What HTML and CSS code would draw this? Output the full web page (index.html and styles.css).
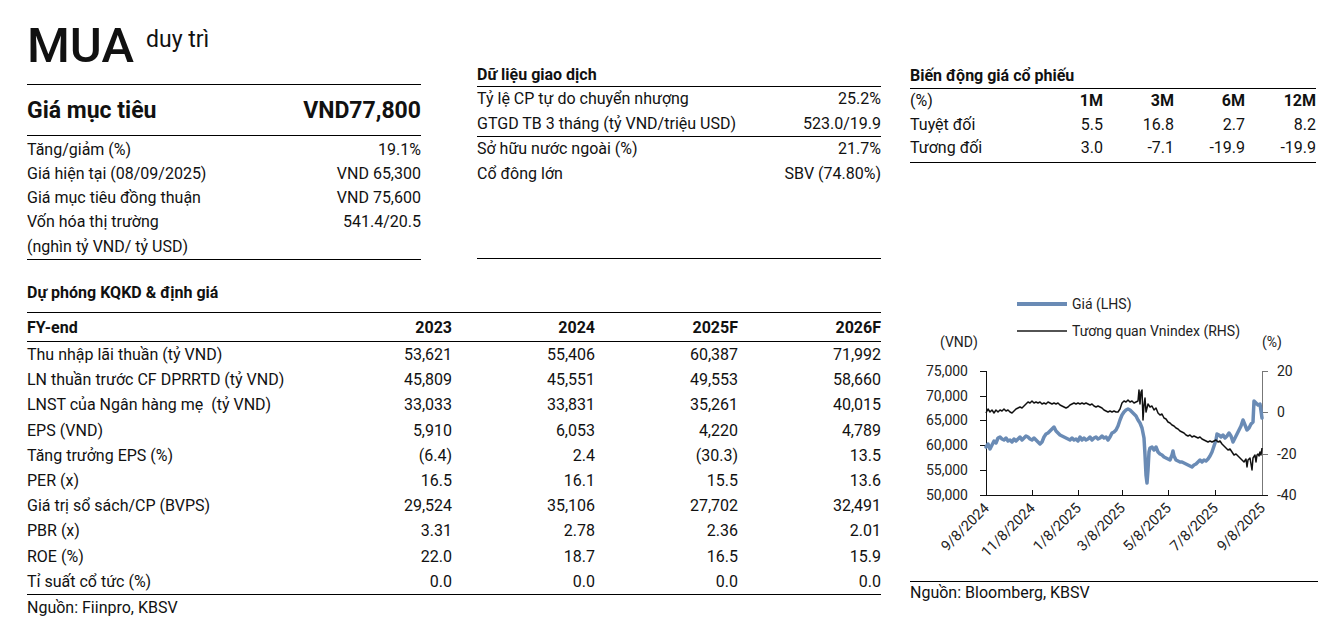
FILE: index.html
```html
<!DOCTYPE html>
<html lang="vi">
<head>
<meta charset="utf-8">
<title>MUA duy trì</title>
<link rel="stylesheet" href="styles.css">
</head>
<body>
<div class="page">
  <div class="top">
    <section class="rating">
      <div class="rating-head">MUA <span class="rating-sub">duy trì</span></div>
      <div class="target"><span>Giá mục tiêu</span><span>VND77,800</span></div>
      <div class="kv-list">
        <div class="kv"><span>Tăng/giảm (%)</span><span>19.1%</span></div>
        <div class="kv"><span>Giá hiện tại (08/09/2025)</span><span>VND 65,300</span></div>
        <div class="kv"><span>Giá mục tiêu đồng thuận</span><span>VND 75,600</span></div>
        <div class="kv"><span>Vốn hóa thị trường</span><span>541.4/20.5</span></div>
        <div class="kv"><span>(nghìn tỷ VND/ tỷ USD)</span><span></span></div>
      </div>
    </section>

    <section class="trade">
      <h2 class="sec-title">Dữ liệu giao dịch</h2>
      <div class="trade-group">
        <div class="kv"><span>Tỷ lệ CP tự do chuyển nhượng</span><span>25.2%</span></div>
        <div class="kv"><span>GTGD TB 3 tháng (tỷ VND/triệu USD)</span><span>523.0/19.9</span></div>
      </div>
      <div class="trade-group trade-group-last">
        <div class="kv"><span>Sở hữu nước ngoài (%)</span><span>21.7%</span></div>
        <div class="kv"><span>Cổ đông lớn</span><span>SBV (74.80%)</span></div>
      </div>
    </section>

    <section class="perf">
      <h2 class="sec-title perf-title">Biến động giá cổ phiếu</h2>
      <div class="perf-grid">
        <span class="pl">(%)</span><span class="ph">1M</span><span class="ph">3M</span><span class="ph">6M</span><span class="ph">12M</span>
        <span class="pl">Tuyệt đối</span><span>5.5</span><span>16.8</span><span>2.7</span><span>8.2</span>
        <span class="pl">Tương đối</span><span>3.0</span><span>-7.1</span><span>-19.9</span><span>-19.9</span>
      </div>
    </section>
  </div>

  <div class="bottom">
    <section class="forecast">
      <h2 class="sec-title fc-title">Dự phóng KQKD &amp; định giá</h2>
      <div class="fc-head">
        <span class="fl">FY-end</span><span>2023</span><span>2024</span><span>2025F</span><span>2026F</span>
      </div>
      <div class="fc-body">
        <span class="fl">Thu nhập lãi thuần (tỷ VND)</span><span>53,621</span><span>55,406</span><span>60,387</span><span>71,992</span>
        <span class="fl">LN thuần trước CF DPRRTD (tỷ VND)</span><span>45,809</span><span>45,551</span><span>49,553</span><span>58,660</span>
        <span class="fl">LNST của Ngân hàng mẹ&nbsp; (tỷ VND)</span><span>33,033</span><span>33,831</span><span>35,261</span><span>40,015</span>
        <span class="fl">EPS (VND)</span><span>5,910</span><span>6,053</span><span>4,220</span><span>4,789</span>
        <span class="fl">Tăng trưởng EPS (%)</span><span>(6.4)</span><span>2.4</span><span>(30.3)</span><span>13.5</span>
        <span class="fl">PER (x)</span><span>16.5</span><span>16.1</span><span>15.5</span><span>13.6</span>
        <span class="fl">Giá trị sổ sách/CP (BVPS)</span><span>29,524</span><span>35,106</span><span>27,702</span><span>32,491</span>
        <span class="fl">PBR (x)</span><span>3.31</span><span>2.78</span><span>2.36</span><span>2.01</span>
        <span class="fl">ROE (%)</span><span>22.0</span><span>18.7</span><span>16.5</span><span>15.9</span>
        <span class="fl">Tỉ suất cổ tức (%)</span><span>0.0</span><span>0.0</span><span>0.0</span><span>0.0</span>
      </div>
      <p class="source">Nguồn: Fiinpro, KBSV</p>
    </section>

    <section class="chart">
      <svg class="chart-svg" width="408" height="285" viewBox="910 290 408 285" xmlns="http://www.w3.org/2000/svg">
        <!-- legend -->
        <line x1="1017" y1="304" x2="1067" y2="304" stroke="#6a8bb5" stroke-width="4"/>
        <text x="1072" y="309" class="lbl">Giá (LHS)</text>
        <line x1="1017" y1="331" x2="1067" y2="331" stroke="#1a1a1a" stroke-width="1.5"/>
        <text x="1072" y="336" class="lbl">Tương quan Vnindex (RHS)</text>
        <text x="940" y="347" class="lbl">(VND)</text>
        <text x="1262" y="347" class="lbl">(%)</text>

        <!-- left axis labels -->
        <g class="lbl" text-anchor="end">
          <text x="968" y="376">75,000</text>
          <text x="968" y="401">70,000</text>
          <text x="968" y="425">65,000</text>
          <text x="968" y="450">60,000</text>
          <text x="968" y="475">55,000</text>
          <text x="968" y="500">50,000</text>
        </g>
        <!-- right axis labels -->
        <g class="lbl">
          <text x="1277" y="376">20</text>
          <text x="1277" y="417">0</text>
          <text x="1277" y="459">-20</text>
          <text x="1277" y="500">-40</text>
        </g>

        <!-- axes -->
        <g stroke="#111" stroke-width="1">
          <line x1="986.5" y1="371" x2="986.5" y2="495"/>
          <line x1="980" y1="371.5" x2="986" y2="371.5"/>
          <line x1="980" y1="396.5" x2="986" y2="396.5"/>
          <line x1="980" y1="420.5" x2="986" y2="420.5"/>
          <line x1="980" y1="445.5" x2="986" y2="445.5"/>
          <line x1="980" y1="470.5" x2="986" y2="470.5"/>
          <line x1="980" y1="495.5" x2="1268" y2="495.5"/>
          <line x1="1032.5" y1="490" x2="1032.5" y2="495"/>
          <line x1="1078.5" y1="490" x2="1078.5" y2="495"/>
          <line x1="1122.5" y1="490" x2="1122.5" y2="495"/>
          <line x1="1168.5" y1="490" x2="1168.5" y2="495"/>
          <line x1="1215.5" y1="490" x2="1215.5" y2="495"/>
        </g>
        <g stroke="#777" stroke-width="1">
          <line x1="1262.5" y1="371" x2="1262.5" y2="495"/>
          <line x1="1262" y1="371.5" x2="1268" y2="371.5"/>
          <line x1="1262" y1="412.5" x2="1268" y2="412.5"/>
          <line x1="1262" y1="454.5" x2="1268" y2="454.5"/>
        </g>

        <!-- price series -->
        <polyline fill="none" stroke="#6a8bb5" stroke-width="3.5" stroke-linejoin="round" stroke-linecap="round"
          points="986,447 988,444 990,449 992,445 994,441 996,443 998,438 1000,437 1002,439 1004,440 1006,438 1008,441 1010,440 1012,442 1014,439 1016,441 1018,439 1020,437 1022,440 1024,438 1026,436 1028,437 1030,439 1032,440 1034,438 1036,440 1038,442 1040,444 1042,442 1044,437 1046,434 1048,433 1050,431 1052,429 1054,427 1056,431 1058,433 1060,435 1062,436 1064,437 1066,438 1068,439 1070,440 1072,438 1074,440 1076,439 1078,441 1080,437 1082,440 1084,438 1086,440 1088,439 1090,437 1092,440 1094,438 1096,437 1098,439 1100,438 1102,436 1104,438 1106,437 1108,440 1110,437 1112,433 1114,432 1116,430 1118,426 1120,420 1122,415 1124,412 1126,410 1128,409 1130,410 1132,412 1134,414 1136,416 1138,420 1140,423 1142,428 1144,438 1145,455 1146,475 1147,483 1148,470 1149,452 1150,448 1152,447 1154,450 1156,447 1158,452 1160,454 1162,455 1164,457 1166,458 1168,459 1170,460 1172,455 1173,451 1174,456 1176,460 1178,461 1180,462 1182,462 1184,463 1186,464 1188,465 1190,466 1192,467 1194,465 1196,464 1198,462 1200,460 1202,462 1204,460 1206,461 1208,459 1210,456 1212,452 1214,446 1216,440 1217,434 1219,435 1221,437 1223,435 1225,438 1227,436 1229,433 1231,436 1233,442 1235,438 1237,434 1239,430 1241,426 1243,420 1245,425 1247,430 1249,428 1251,424 1253,422 1254,401 1256,403 1258,405 1260,404 1262,418"/>
        <!-- relative series -->
        <polyline fill="none" stroke="#111" stroke-width="1.5" stroke-linejoin="round"
          points="986,413 988,409 990,412 992,410 994,413 996,410 998,412 1000,410 1002,411 1004,409 1006,411 1008,410 1010,412 1012,413 1014,411 1016,409 1018,408 1020,407 1022,408 1024,406 1026,404 1028,402 1030,403 1032,401 1034,403 1036,402 1038,403 1040,402 1042,404 1044,403 1046,404 1048,402 1050,403 1052,404 1054,403 1056,404 1058,403 1060,405 1062,406 1064,407 1066,408 1068,407 1070,405 1072,404 1074,403 1076,404 1078,403 1080,404 1082,403 1084,404 1086,403 1088,404 1090,405 1092,404 1094,406 1096,407 1098,406 1100,407 1102,408 1104,410 1106,411 1108,412 1110,411 1112,412 1114,411 1116,412 1118,412 1120,409 1122,403 1124,401 1126,402 1128,400 1130,402 1132,401 1134,403 1136,402 1138,401 1139,390 1140,404 1141,392 1142,390 1143,420 1144,405 1145,398 1146,412 1148,404 1150,407 1152,406 1154,410 1156,408 1158,413 1160,415 1162,414 1164,418 1166,419 1168,422 1170,423 1172,425 1174,426 1176,428 1178,429 1180,431 1182,432 1184,433 1186,435 1188,436 1190,435 1192,437 1194,436 1196,437 1198,438 1200,437 1202,439 1204,440 1206,441 1208,442 1210,441 1212,442 1214,441 1216,440 1218,442 1220,441 1222,444 1224,446 1226,448 1228,450 1230,449 1232,452 1234,455 1236,454 1238,456 1240,458 1242,460 1244,462 1246,459 1247,467 1248,460 1250,458 1251,464 1252,470 1253,458 1255,455 1256,462 1257,455 1258,454 1259,456 1260,452 1261,455 1262,448"/>

        <!-- x labels -->
        <g class="xl" text-anchor="end">
          <text x="990" y="509" transform="rotate(-45 990 509)">9/8/2024</text>
          <text x="1036" y="509" transform="rotate(-45 1036 509)">11/8/2024</text>
          <text x="1082" y="509" transform="rotate(-45 1082 509)">1/8/2025</text>
          <text x="1126" y="509" transform="rotate(-45 1126 509)">3/8/2025</text>
          <text x="1172" y="509" transform="rotate(-45 1172 509)">5/8/2025</text>
          <text x="1219" y="509" transform="rotate(-45 1219 509)">7/8/2025</text>
          <text x="1266" y="509" transform="rotate(-45 1266 509)">9/8/2025</text>
        </g>
      </svg>
      <p class="chart-source">Nguồn: Bloomberg, KBSV</p>
    </section>
  </div>
</div>
</body>
</html>
```

FILE: styles.css
```css
* {
  box-sizing: border-box;
  margin: 0;
  padding: 0;
}

body {
  margin: 0;
  width: 1344px;
  height: 635px;
  overflow: hidden;
  background: #fff;
  color: #111;
  font-family: Roboto, "Noto Sans", "DejaVu Sans", sans-serif;
  font-size: 16px;
}

.page {
  padding-left: 27px;
}

/* ---------- top row ---------- */
.top {
  display: flex;
  align-items: flex-start;
  height: 260px;
}

.rating {
  width: 394px;
}

.rating-head {
  padding-top: 16px;
  padding-bottom: 8px;
  line-height: 60px;
  font-size: 49px;
  font-weight: 500;
  border-bottom: 1px solid #000;
}

.rating-sub {
  font-size: 23px;
  font-weight: 400;
  line-height: 1;
  vertical-align: 15px;
}

.target {
  display: flex;
  justify-content: space-between;
  font-size: 23px;
  font-weight: 700;
  line-height: 30px;
  padding: 11px 0 9px;
  border-bottom: 1px solid #000;
}

.kv {
  display: flex;
  justify-content: space-between;
}

.kv-list {
  padding-top: 1.5px;
  border-bottom: 1px solid #000;
}

.kv-list .kv {
  line-height: 24.25px;
}

.sec-title {
  font-size: 16px;
  font-weight: 700;
  line-height: 23px;
  border-bottom: 1px solid #000;
}

.trade {
  width: 404px;
  margin-left: 56px;
  padding-top: 63px;
}

.trade-group {
  border-bottom: 1px solid #000;
}

.trade-group .kv {
  line-height: 24.5px;
}

.trade-group-last {
  height: 122px;
}

.perf {
  width: 406px;
  margin-left: 29px;
  padding-top: 64px;
}

.perf-title {
  line-height: 24px;
}

.perf-grid {
  display: grid;
  grid-template-columns: 122px repeat(4, 71px);
  line-height: 23.5px;
  padding-bottom: 2.5px;
  border-bottom: 1px solid #000;
  text-align: right;
}

.perf-grid .pl {
  text-align: left;
}

.perf-grid .ph {
  font-weight: 700;
}

/* ---------- bottom row ---------- */
.bottom {
  display: flex;
  align-items: flex-start;
  margin-top: 20px;
}

.forecast {
  width: 854px;
}

.fc-title {
  line-height: 25px;
  padding-bottom: 7px;
}

.fc-head,
.fc-body {
  display: grid;
  grid-template-columns: 282px repeat(4, 143px);
  text-align: right;
  border-bottom: 1px solid #000;
}

.fc-head {
  font-weight: 700;
  line-height: 25px;
  padding: 2px 0 1px;
}

.fc-body {
  line-height: 25.2px;
}

.fl {
  text-align: left;
}

.source {
  line-height: 25px;
}

.chart {
  width: 408px;
  margin-left: 29px;
  padding-top: 10px;
}

.chart-svg {
  display: block;
}

.chart-svg text {
  font-family: Roboto, "Noto Sans", sans-serif;
  font-size: 14px;
  fill: #222;
}

.chart-svg .xl text {
  font-size: 14.5px;
}

.chart-source {
  margin-top: 6px;
  border-top: 1px solid #000;
  line-height: 21px;
}
```
